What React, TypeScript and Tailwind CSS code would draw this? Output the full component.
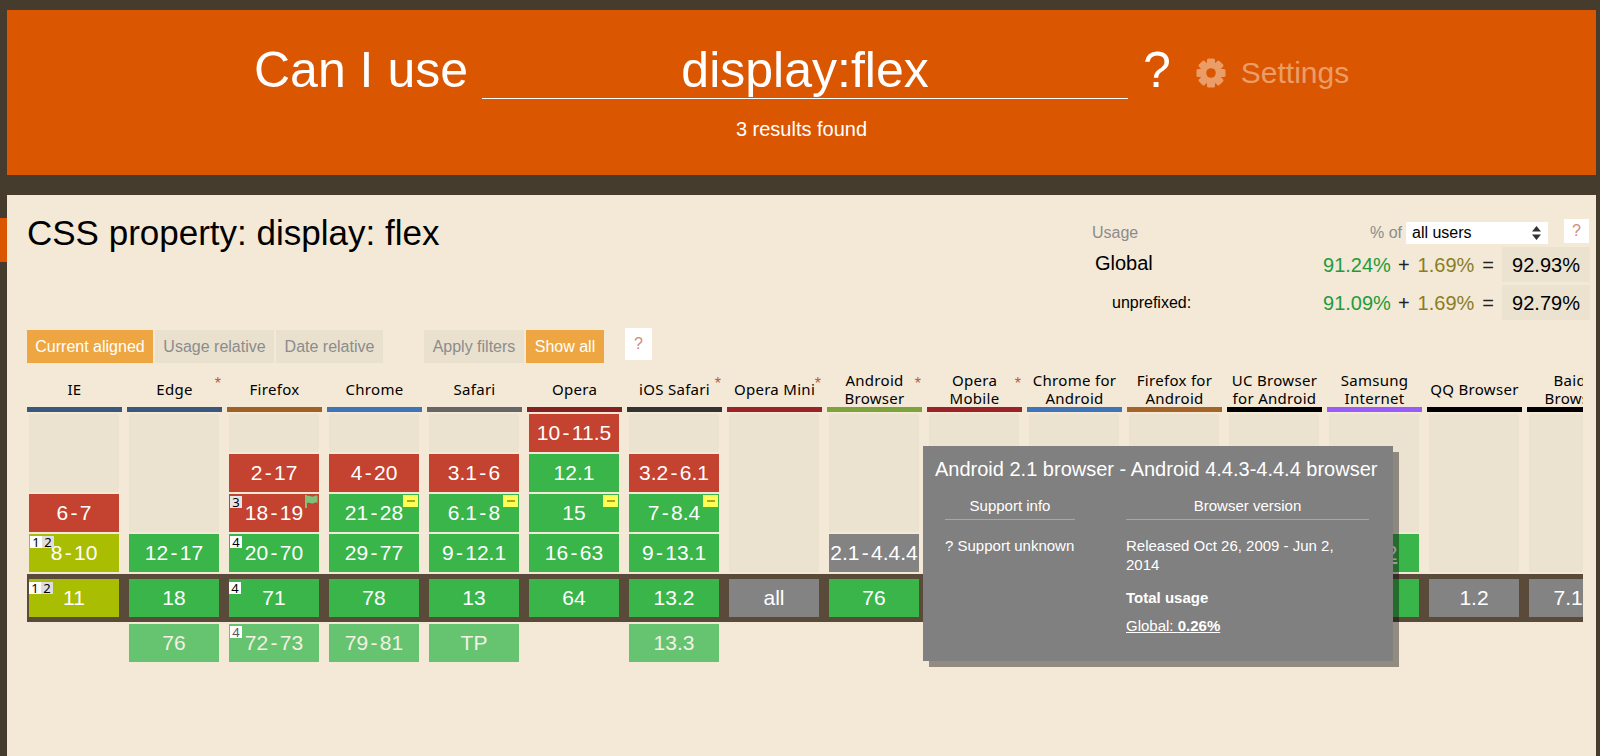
import React from "react";

type Kind = "empty" | "red" | "green" | "lime" | "gray" | "future";
type Cell = {
  t?: string;
  k: Kind;
  span?: number;
  notes?: string[];
  minus?: boolean;
  flag?: boolean;
  under?: boolean;
};
type Col = { name: string[]; bar: string; star?: boolean; cells: Cell[]; now: Cell; next?: Cell };

const kindClass: Record<Kind, string> = {
  empty: "bg-[#ebe3d0]",
  red: "bg-[#c44230] text-white",
  green: "bg-[#39b54a] text-white",
  lime: "bg-[#a9bd02] text-white",
  gray: "bg-[#838383] text-white",
  future: "bg-[#66c370] text-[#f3f1e4]",
};

const spanClass: Record<number, string> = {
  1: "h-[38px]",
  2: "h-[78px]",
  3: "h-[118px]",
  4: "h-[158px]",
};

const e = (span = 1): Cell => ({ k: "empty", span });

const cols: Col[] = [
  {
    name: ["IE"],
    bar: "bg-[#39587f]",
    cells: [e(2), { t: "6 - 7", k: "red" }, { t: "8 - 10", k: "lime", notes: ["1", "2"] }],
    now: { t: "11", k: "lime", notes: ["1", "2"] },
  },
  {
    name: ["Edge"],
    bar: "bg-[#39587f]",
    star: true,
    cells: [e(3), { t: "12 - 17", k: "green" }],
    now: { t: "18", k: "green" },
    next: { t: "76", k: "future" },
  },
  {
    name: ["Firefox"],
    bar: "bg-[#a06224]",
    cells: [
      e(),
      { t: "2 - 17", k: "red" },
      { t: "18 - 19", k: "red", notes: ["3"], flag: true },
      { t: "20 - 70", k: "green", notes: ["4"] },
    ],
    now: { t: "71", k: "green", notes: ["4"] },
    next: { t: "72 - 73", k: "future", notes: ["4"] },
  },
  {
    name: ["Chrome"],
    bar: "bg-[#3f74b8]",
    cells: [
      e(),
      { t: "4 - 20", k: "red" },
      { t: "21 - 28", k: "green", minus: true },
      { t: "29 - 77", k: "green" },
    ],
    now: { t: "78", k: "green" },
    next: { t: "79 - 81", k: "future" },
  },
  {
    name: ["Safari"],
    bar: "bg-[#666666]",
    cells: [
      e(),
      { t: "3.1 - 6", k: "red" },
      { t: "6.1 - 8", k: "green", minus: true },
      { t: "9 - 12.1", k: "green" },
    ],
    now: { t: "13", k: "green" },
    next: { t: "TP", k: "future" },
  },
  {
    name: ["Opera"],
    bar: "bg-[#832223]",
    cells: [
      { t: "10 - 11.5", k: "red" },
      { t: "12.1", k: "green" },
      { t: "15", k: "green", minus: true },
      { t: "16 - 63", k: "green" },
    ],
    now: { t: "64", k: "green" },
  },
  {
    name: ["iOS Safari"],
    bar: "bg-[#333333]",
    star: true,
    cells: [
      e(),
      { t: "3.2 - 6.1", k: "red" },
      { t: "7 - 8.4", k: "green", minus: true },
      { t: "9 - 13.1", k: "green" },
    ],
    now: { t: "13.2", k: "green" },
    next: { t: "13.3", k: "future" },
  },
  {
    name: ["Opera Mini"],
    bar: "bg-[#9b2226]",
    star: true,
    cells: [e(4)],
    now: { t: "all", k: "gray" },
  },
  {
    name: ["Android", "Browser"],
    bar: "bg-[#7ca33c]",
    star: true,
    cells: [e(3), { t: "2.1 - 4.4.4", k: "gray" }],
    now: { t: "76", k: "green" },
  },
  {
    name: ["Opera", "Mobile"],
    bar: "bg-[#9b2226]",
    star: true,
    cells: [e(4)],
    now: { t: "46", k: "green" },
  },
  {
    name: ["Chrome for", "Android"],
    bar: "bg-[#3f74b8]",
    cells: [e(4)],
    now: { t: "78", k: "green" },
  },
  {
    name: ["Firefox for", "Android"],
    bar: "bg-[#a66528]",
    cells: [e(4)],
    now: { t: "68", k: "green" },
  },
  {
    name: ["UC Browser", "for Android"],
    bar: "bg-black",
    cells: [e(4)],
    now: { t: "12.12", k: "green" },
  },
  {
    name: ["Samsung", "Internet"],
    bar: "bg-[#9a5cf8]",
    cells: [e(3), { t: "4 - 12", k: "green", under: true }],
    now: { t: "13", k: "green" },
  },
  {
    name: ["QQ Browser"],
    bar: "bg-black",
    cells: [e(4)],
    now: { t: "1.2", k: "gray" },
  },
  {
    name: ["Baidu", "Browser"],
    bar: "bg-black",
    cells: [e(4)],
    now: { t: "7.12", k: "gray" },
  },
];

function Gear() {
  const teeth = [0, 45, 90, 135];
  return (
    <svg width="30" height="30" viewBox="0 0 30 30" className="shrink-0">
      {teeth.map((a) => (
        <rect key={a} x="11" y="0.5" width="8" height="29" rx="1.5" fill="#eb9d68" transform={`rotate(${a} 15 15)`} />
      ))}
      <circle cx="15" cy="15" r="11" fill="#eb9d68" />
      <circle cx="15" cy="15" r="4.8" fill="#db5600" />
    </svg>
  );
}

function Minus() {
  return (
    <span className="absolute top-px right-px flex h-[12px] w-[15px] items-center justify-center bg-[#ffff55]">
      <span className="h-[2px] w-[8px] bg-[#a8a81e]" />
    </span>
  );
}

function Flag() {
  return (
    <svg className="absolute top-px right-px" width="13" height="13" viewBox="0 0 13 13">
      <path d="M0 0h2v13H0z M2 1c3-1.2 4 1 6 .6S11 0 12.5 1v7C11 7 10 8 8 8.4S5 7 2 8z" fill="#7cc47a" />
    </svg>
  );
}

function Notes({ notes, faded, current }: { notes: string[]; faded: boolean; current: boolean }) {
  return (
    <span
      className={
        current
          ? "absolute top-[3px] left-0 flex font-['Noto_Sans',sans-serif] text-[13px] leading-[12px] text-black"
          : "absolute top-[2px] left-px flex font-['Noto_Sans',sans-serif] text-[13px] leading-[12px] text-black"
      }
    >
      {notes.map((n, i) => (
        <span
          key={n}
          className={
            faded
              ? "h-[12px] w-[12px] bg-white text-center text-[#555555]"
              : i === 1
                ? "h-[12px] w-[12px] bg-[#dedede] text-center"
                : n === "3"
                  ? "h-[12px] w-[12px] bg-[#e6e6e6] text-center"
                  : "h-[12px] w-[12px] bg-white text-center"
          }
        >
          {n}
        </span>
      ))}
    </span>
  );
}

function StatCell({ c, current = false }: { c: Cell; current?: boolean }) {
  const h = spanClass[c.span ?? 1];
  return (
    <div
      className={`relative ml-[2px] flex w-[90px] shrink-0 items-center justify-center text-[21px] whitespace-nowrap [word-spacing:-3.5px] ${h} ${kindClass[c.k]}`}
    >
      {c.notes && <Notes notes={c.notes} faded={c.k === "future"} current={current} />}
      {c.minus && <Minus />}
      {c.flag && <Flag />}
      {c.t && <span className={c.under ? "underline" : ""}>{c.t}</span>}
    </div>
  );
}

function UsageRow({ label, sup, part, total, big }: { label: string; sup: string; part: string; total: string; big?: boolean }) {
  return (
    <div className="flex h-[35px] items-center">
      <div
        className={
          big
            ? "w-[222px] pb-[3px] pl-[3px] text-[20px] text-black"
            : "w-[222px] pl-[20px] text-[16px] text-black"
        }
      >
        {label}
      </div>
      <div className="flex w-[188px] items-center justify-end whitespace-nowrap text-[20px]">
        <span className="text-[#1f9b3c]">{sup}</span>
        <span className="mr-[8px] ml-[7px] text-[#222222]">+</span>
        <span className="text-[#8a7d1f]">{part}</span>
        <span className="mx-[8px] text-[#222222]">=</span>
      </div>
      <div className="flex h-[35px] w-[88px] items-center justify-center bg-[#ebe3d0] text-[20px] text-black">{total}</div>
    </div>
  );
}

export default function App() {
  return (
    <div className="relative flex h-[756px] flex-col overflow-hidden bg-[#453c2d] pt-[10px] pr-[4px] pl-[7px] font-['Liberation_Sans',Arial,sans-serif]">
      <div className="absolute top-[218px] left-0 h-[44px] w-[7px] bg-[#db5600]" />

      <header className="flex h-[165px] shrink-0 flex-col bg-[#db5600] text-white">
        <div className="flex h-[89px] items-start pt-[28px] pl-[247px]">
          <span className="mt-[3px] text-[50px] leading-[58px] whitespace-nowrap">Can I use</span>
          <div className="ml-[14px] h-[61px] w-[646px] border-b border-white pt-[3px] text-center text-[50px] leading-[58px]">display:flex</div>
          <span className="mt-[3px] ml-[15px] text-[50px] leading-[58px]">?</span>
          <span className="mt-[18px] ml-[25px] flex items-center gap-[15px] whitespace-nowrap text-[30px] leading-[34px] text-[#eb9d68]">
            <Gear />
            Settings
          </span>
        </div>
        <div className="mt-[18px] text-center text-[20px] leading-[24px]">3 results found</div>
      </header>

      <main className="mt-[20px] flex min-h-0 flex-1 flex-col bg-[#f3e9d6] pl-[20px]">
        <div className="flex h-[135px] shrink-0 items-start">
          <h1 className="mt-[18px] w-[1065px] text-[35px] leading-[40px] whitespace-nowrap text-black">CSS property: display: flex</h1>
          <div className="mt-[24px] flex flex-col">
            <div className="flex h-[28px] items-start">
              <span className="mt-[3px] w-[278px] text-[16px] leading-[22px] text-[#8c8c8c]">Usage</span>
              <span className="mt-[3px] mr-[4px] text-[16px] leading-[22px] text-[#8c8c8c]">% of</span>
              <div className="mt-[3px] flex h-[22px] w-[142px] items-center justify-between bg-white pr-[7px] pl-[6px] text-[16px] text-black">
                all users
                <svg width="9" height="14" viewBox="0 0 9 14">
                  <path d="M4.5 0 9 5.5H0zM0 8.5h9L4.5 14z" fill="#333333" />
                </svg>
              </div>
              <div className="ml-[16px] flex h-[24px] w-[25px] items-center justify-center bg-white text-[16px] text-[#d08a7c]">?</div>
            </div>
            <UsageRow big label="Global" sup="91.24%" part="1.69%" total="92.93%" />
            <div className="h-[3px]" />
            <UsageRow label="unprefixed:" sup="91.09%" part="1.69%" total="92.79%" />
          </div>
        </div>

        <div className="flex h-[33px] shrink-0 items-stretch whitespace-nowrap text-[16px]">
          <button className="flex w-[126px] items-center justify-center bg-[#eea642] text-white">Current aligned</button>
          <button className="ml-[2px] flex w-[119px] items-center justify-center bg-[#e9e1ce] text-[#8c8c8c]">Usage relative</button>
          <button className="ml-[2px] flex w-[107px] items-center justify-center bg-[#e9e1ce] text-[#8c8c8c]">Date relative</button>
          <button className="ml-[41px] flex w-[100px] items-center justify-center bg-[#e9e1ce] text-[#8c8c8c]">Apply filters</button>
          <button className="ml-[2px] flex w-[78px] items-center justify-center bg-[#eea642] text-white">Show all</button>
          <button className="mb-[3px] ml-[21px] -mt-[2px] flex w-[27px] items-center justify-center bg-white text-[16px] text-[#d08a7c]">?</button>
        </div>

        <div className="mt-[5px] w-[1556px] overflow-hidden pt-[4px]">
          <div className="flex gap-[5px]">
            {cols.map((c) => (
              <div key={c.name.join(" ")} className="relative w-[95px] shrink-0">
                <div className="flex h-[35px] flex-col items-center justify-center pb-[2px] font-['Noto_Sans',sans-serif] text-[15px] leading-[18px] tracking-[0.3px] whitespace-nowrap text-black">
                  {c.name.map((l) => (
                    <span key={l}>{l}</span>
                  ))}
                </div>
                {c.star && <span className="absolute top-[4px] right-[1px] text-[16px] leading-[16px] text-[#c0564a]">*</span>}
                <div className={`h-[5px] ${c.bar}`} />
                <div className="mt-[2px] flex flex-col gap-[2px]">
                  {c.cells.map((x, i) => (
                    <StatCell key={i} c={x} />
                  ))}
                </div>
              </div>
            ))}
          </div>

          <div className="mt-[2px] flex h-[48px] items-center gap-[5px] bg-[#5a4a3a]">
            {cols.map((c) => (
              <div key={c.name.join(" ")} className="w-[95px] shrink-0">
                <StatCell c={c.now} current />
              </div>
            ))}
          </div>

          <div className="mt-[2px] flex gap-[5px]">
            {cols.map((c) => (
              <div key={c.name.join(" ")} className="h-[38px] w-[95px] shrink-0">
                {c.next && <StatCell c={c.next} />}
              </div>
            ))}
          </div>
        </div>
      </main>

      <div className="absolute top-[446px] left-[923px] h-[215px] w-[470px] bg-[#808080] px-[12px] pt-[10px] text-white shadow-[6px_6px_0_rgba(0,0,0,0.4)]">
        <div className="text-[20px] leading-[26px] whitespace-nowrap">Android 2.1 browser - Android 4.4.3-4.4.4 browser</div>
        <div className="mt-[15px] flex text-[15px]">
          <div className="ml-[10px] w-[130px]">
            <div className="border-b border-[#a6a6a6] pb-[4px] text-center leading-[18px]">Support info</div>
            <div className="mt-[16px] leading-[19px]">? Support unknown</div>
          </div>
          <div className="ml-[51px] w-[243px]">
            <div className="border-b border-[#a6a6a6] pb-[4px] text-center leading-[18px]">Browser version</div>
            <div className="mt-[16px] leading-[19px]">Released Oct 26, 2009 - Jun 2, 2014</div>
            <div className="mt-[15px] leading-[18px] font-bold">Total usage</div>
            <div className="mt-[10px] leading-[18px] underline">
              Global: <b>0.26%</b>
            </div>
          </div>
        </div>
      </div>
    </div>
  );
}
